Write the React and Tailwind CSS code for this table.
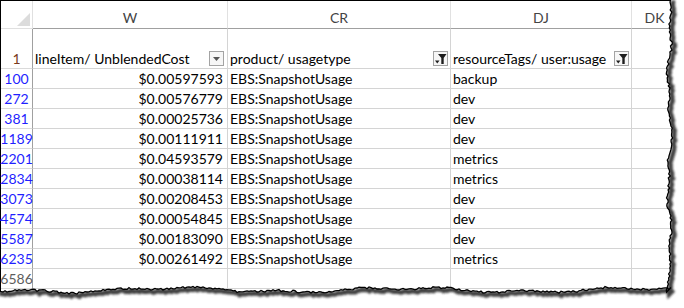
import React from 'react';

const font = { fontFamily: 'Lato, "Open Sans", sans-serif' };

const rows = [
  ['100', '$0.00597593', 'EBS:SnapshotUsage', 'backup'],
  ['272', '$0.00576779', 'EBS:SnapshotUsage', 'dev'],
  ['381', '$0.00025736', 'EBS:SnapshotUsage', 'dev'],
  ['1189', '$0.00111911', 'EBS:SnapshotUsage', 'dev'],
  ['2201', '$0.04593579', 'EBS:SnapshotUsage', 'metrics'],
  ['2834', '$0.00038114', 'EBS:SnapshotUsage', 'metrics'],
  ['3073', '$0.00208453', 'EBS:SnapshotUsage', 'dev'],
  ['4574', '$0.00054845', 'EBS:SnapshotUsage', 'dev'],
  ['5587', '$0.00183090', 'EBS:SnapshotUsage', 'dev'],
  ['6235', '$0.00261492', 'EBS:SnapshotUsage', 'metrics'],
];

// torn paper edge (right + bottom)
function tornPoints() {
  let seed = 7;
  const rnd = () => {
    seed = (seed * 9301 + 49297) % 233280;
    return seed / 233280 - 0.5;
  };
  const pts = [];
  for (let y = -2; y <= 293; y += 2) {
    const x = 669.5 + 1.5 * Math.sin(y / 17) + 1.2 * Math.sin(y / 7 + 1) + rnd() * 2.2;
    pts.push([x, y]);
  }
  for (let x = 671; x >= -4; x -= 2) {
    const y = 290 + 2 * Math.sin(x / 37) + 1.3 * Math.sin(x / 13 + 2) + rnd() * 2.2;
    pts.push([x, y]);
  }
  return pts;
}

const pts = tornPoints();
const line = pts.map((p, i) => `${i ? 'L' : 'M'}${p[0].toFixed(1)} ${p[1].toFixed(1)}`).join(' ');
const outside = `M690 -10 ${line.replace(/^M/, 'L')} L-10 320 L690 320 Z`;

function TornEdge() {
  return (
    <svg className="absolute inset-0 pointer-events-none" width="684" height="308">
      <defs>
        <filter id="blur" x="-10%" y="-10%" width="120%" height="120%">
          <feGaussianBlur stdDeviation="1.3" />
        </filter>
        <clipPath id="out">
          <path d={outside} />
        </clipPath>
      </defs>
      <path d={outside} fill="#fff" />
      <g clipPath="url(#out)">
        <path d={line} transform="translate(2.5 2.5)" fill="none" stroke="#2a2a2a" strokeWidth="4.5" filter="url(#blur)" opacity="0.9" />
      </g>
      <path d={line} fill="none" stroke="#000" strokeWidth="1.3" />
    </svg>
  );
}

function FilterBtn({ funnel }) {
  return (
    <div className="w-[15px] h-[15px] border border-[#a3a3a3] bg-[#f6f6f6] flex items-center justify-center shrink-0 mb-[1px]">
      {funnel ? (
        <svg width="13" height="13" viewBox="0 0 13 13">
          <path d="M4 2h8.5L9.7 6V12H7.3V6Z" fill="#1e1e1e" />
          <path d="M1 8.5h4.5L3.25 11.5Z" fill="#1e1e1e" />
        </svg>
      ) : (
        <svg width="9" height="6" viewBox="0 0 9 6">
          <path d="M1 1h7L4.5 5Z" fill="#555" />
        </svg>
      )}
    </div>
  );
}

const cell = 'h-[20px] border-r border-b border-[#d4d4d4] flex items-end pb-[1px] text-[14px] leading-[17px] text-black';

export default function App() {
  return (
    <div className="w-[684px] h-[308px] bg-white relative overflow-hidden" style={font}>
      <div className="border-t border-l border-black">
        {/* column letters */}
        <div className="flex h-[28px] text-[14px] text-[#444]">
          <div className="w-[32px] h-[28px] border-r border-b border-[#e0e0e0] relative">
            <svg className="absolute left-[16px] top-[12px]" width="13" height="13" viewBox="0 0 13 13">
              <path d="M13 0V13H0Z" fill="#dcdcdc" />
            </svg>
          </div>
          <div className="w-[195px] border-r border-[#e1e1e1] border-b-[#a0a0a0] border-b flex items-center justify-center pt-[5px]">W</div>
          <div className="w-[223px] border-r border-[#e1e1e1] border-b-[#a0a0a0] border-b flex items-center justify-center pt-[5px]">CR</div>
          <div className="w-[181px] border-r border-[#e1e1e1] border-b-[#a0a0a0] border-b flex items-center justify-center pt-[5px]">DJ</div>
          <div className="w-[46px] border-r border-[#e1e1e1] border-b-[#a0a0a0] border-b flex items-center justify-center pt-[5px]">DK</div>
          <div className="flex-1 border-b border-[#a0a0a0]" />
        </div>

        {/* header row */}
        <div className="flex h-[40px]">
          <div className="w-[32px] border-r border-b border-r-[#a0a0a0] border-b-[#dadada] flex items-end justify-center pb-[1px] text-[14px] leading-[17px] text-[#7a3a1c]">1</div>
          <div className="w-[195px] border-r border-b border-[#d4d4d4] flex items-end justify-between pl-[2px] pr-[3px] pb-[1px] text-[14px] leading-[17px]">
            <span>lineItem/ UnblendedCost</span>
            <FilterBtn />
          </div>
          <div className="w-[223px] border-r border-b border-[#d4d4d4] flex items-end justify-between pl-[2px] pr-[2px] pb-[1px] text-[14px] leading-[17px]">
            <span>product/ usagetype</span>
            <FilterBtn funnel />
          </div>
          <div className="w-[181px] border-r border-b border-[#d4d4d4] flex items-end justify-between pl-[2px] pr-[2px] pb-[1px] text-[14px] leading-[17px]">
            <span>resourceTags/ user:usage</span>
            <FilterBtn funnel />
          </div>
          <div className="w-[46px] border-r border-b border-[#d4d4d4]" />
          <div className="flex-1 border-b border-[#d4d4d4]" />
        </div>

        {rows.map((r) => (
          <div key={r[0]} className="flex">
            <div className="w-[32px] h-[20px] border-r border-b border-r-[#a0a0a0] border-b-[#dadada] flex items-end justify-center pb-[1px] text-[14px] leading-[17px] text-[#1f1fff]">{r[0]}</div>
            <div className={`${cell} w-[195px] justify-end pr-[4px]`}>{r[1]}</div>
            <div className={`${cell} w-[223px] pl-[2px]`}>{r[2]}</div>
            <div className={`${cell} w-[181px] pl-[2px]`}>{r[3]}</div>
            <div className={`${cell} w-[46px]`} />
            <div className="flex-1 h-[20px] border-b border-[#d4d4d4]" />
          </div>
        ))}

        <div className="flex">
          <div className="w-[32px] h-[20px] border-r border-b border-r-[#a0a0a0] border-b-[#dadada] flex items-end justify-center pb-[1px] text-[14px] leading-[17px] text-[#5e5e5e]">6586</div>
          <div className={`${cell} w-[195px]`} />
          <div className={`${cell} w-[223px]`} />
          <div className={`${cell} w-[181px]`} />
          <div className={`${cell} w-[46px]`} />
          <div className="flex-1 h-[20px] border-b border-[#d4d4d4]" />
        </div>
        <div className="flex h-[20px]">
          <div className="w-[32px] border-r border-[#a0a0a0]" />
          <div className="w-[195px] border-r border-[#d4d4d4]" />
          <div className="w-[223px] border-r border-[#d4d4d4]" />
          <div className="w-[181px] border-r border-[#d4d4d4]" />
          <div className="w-[46px] border-r border-[#d4d4d4]" />
        </div>
      </div>
      <TornEdge />
    </div>
  );
}
